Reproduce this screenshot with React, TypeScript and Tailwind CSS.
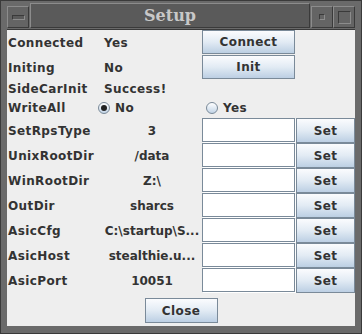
import type { ReactNode } from "react";

const font = { fontFamily: '"DejaVu Sans", Verdana, sans-serif' };

function Btn({ children, className = "" }: { children: ReactNode; className?: string }) {
  return (
    <div
      className={`flex items-center justify-center border border-[#7a8a99] bg-gradient-to-b from-[#fbfcfe] via-[#e2ebf4] to-[#bccfe3] text-[12px] font-bold text-[#333] ${className}`}
    >
      {children}
    </div>
  );
}

function Field() {
  return (
    <div className="h-[24px] w-[93px] border border-[#7a8a99] bg-white shadow-[inset_1px_1px_0_#fff,1px_1px_0_#fff]" />
  );
}

function Radio({ on, label }: { on?: boolean; label: string }) {
  return (
    <div className="flex items-center gap-[5px]">
      <span className="flex h-[12px] w-[12px] items-center justify-center rounded-full border border-[#7a8a99] bg-gradient-to-b from-[#ffffff] to-[#c2d4e6]">
        {on && <span className="h-[6px] w-[6px] rounded-full bg-[#222]" />}
      </span>
      <span>{label}</span>
    </div>
  );
}

const rows = [
  ["SetRpsType", "3"],
  ["UnixRootDir", "/data"],
  ["WinRootDir", "Z:\\"],
  ["OutDir", "sharcs"],
  ["AsicCfg", "C:\\startup\\S..."],
  ["AsicHost", "stealthie.u..."],
  ["AsicPort", "10051"],
];

function TitleBox({ children }: { children?: ReactNode }) {
  return (
    <div className="flex h-[22px] w-[22px] items-center justify-center border border-t-[#8c8c8c] border-l-[#8c8c8c] border-b-[#3a3a3a] border-r-[#3a3a3a] bg-[#646464]">
      {children}
    </div>
  );
}

export default function App() {
  return (
    <div className="flex h-[334px] w-[362px] flex-col border border-[#3a3a3a] bg-[#6a6a6a]" style={font}>
      {/* title bar */}
      <div className="flex h-[28px] items-end px-[6px] pb-[1px]">
        <TitleBox>
          <span className="h-[5px] w-[13px] border border-t-[#3a3a3a] border-l-[#3a3a3a] border-b-[#8c8c8c] border-r-[#8c8c8c] bg-[#5a5a5a]" />
        </TitleBox>
        <div className="mx-[1px] flex h-[25px] flex-1 items-center justify-center border border-t-[#8c8c8c] border-l-[#8c8c8c] border-b-[#3a3a3a] border-r-[#3a3a3a] bg-[#5a5a5a]">
          <span
            className="text-[16px] font-bold leading-none text-[#c8c8c8]"
            style={{ fontFamily: '"DejaVu Serif", "Liberation Serif", serif' }}
          >
            Setup
          </span>
        </div>
        <TitleBox>
          <span className="h-[6px] w-[6px] border border-t-[#3a3a3a] border-l-[#3a3a3a] border-b-[#8c8c8c] border-r-[#8c8c8c]" />
        </TitleBox>
        <TitleBox>
          <span className="h-[13px] w-[13px] border border-t-[#3a3a3a] border-l-[#3a3a3a] border-b-[#8c8c8c] border-r-[#8c8c8c]" />
        </TitleBox>
      </div>

      {/* content */}
      <div className="mx-[6px] mb-[7px] flex flex-1 flex-col border-t border-[#3a3a3a] bg-[#eeeeee] text-[12px] font-bold tracking-[0.4px] text-[#333]">
        <div className="grid grid-cols-[91px_104px_93px_59px] grid-rows-[25px_25px_17px_21px] items-center">
          <span className="pl-[1px]">Connected</span>
          <span className="pl-[6px]">Yes</span>
          <Btn className="h-[24px] self-start">Connect</Btn>
          <span />
          <span className="pl-[1px]">Initing</span>
          <span className="pl-[6px]">No</span>
          <Btn className="h-[24px] self-start">Init</Btn>
          <span />
          <span className="pl-[1px]">SideCarInit</span>
          <span className="pl-[6px]">Success!</span>
          <span />
          <span />
          <span className="pl-[1px]">WriteAll</span>
          <Radio on label="No" />
          <div className="pl-[4px]">
            <Radio label="Yes" />
          </div>
          <span />
        </div>

        <div className="grid grid-cols-[91px_104px_94px_59px] auto-rows-[25px] items-center">
          {rows.map(([label, value]) => (
            <div key={label} className="contents">
              <span className="pl-[1px]">{label}</span>
              <span className="whitespace-nowrap pl-[4px] text-center tracking-normal">{value}</span>
              <div className="self-start">
                <Field />
              </div>
              <Btn className="h-[25px] self-start">Set</Btn>
            </div>
          ))}
        </div>

        <div className="flex justify-center pt-[5px]">
          <Btn className="h-[25px] w-[73px]">Close</Btn>
        </div>
      </div>
    </div>
  );
}
